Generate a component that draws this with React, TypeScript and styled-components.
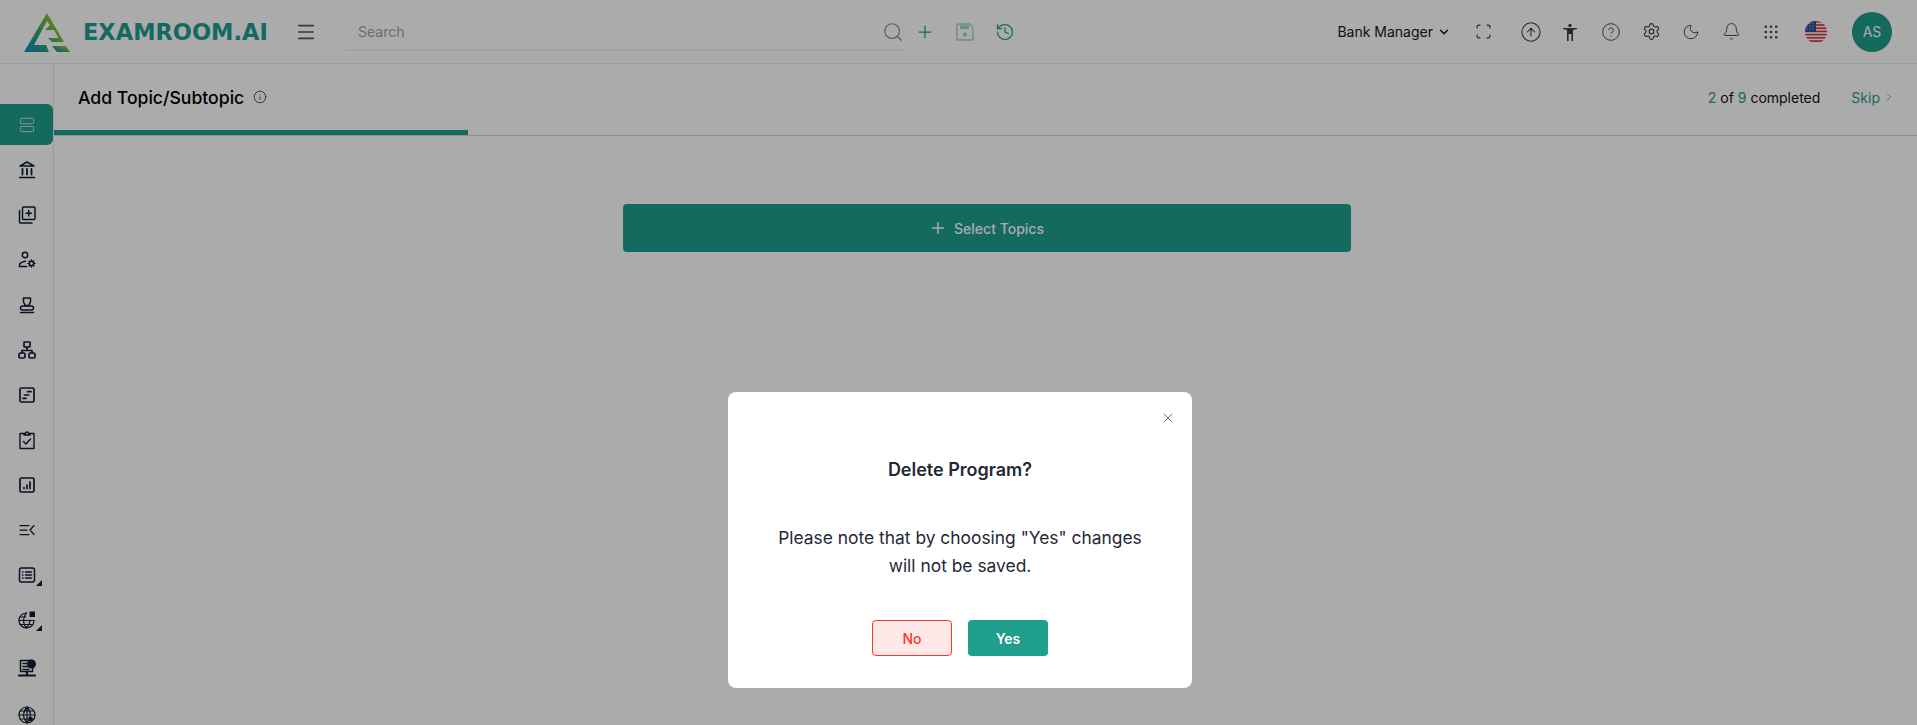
import React from "react";
import styled, { createGlobalStyle } from "styled-components";
import {
  Bell,
  ChevronDown,
  ChevronRight,
  CircleArrowUp,
  CircleHelp,
  Grip,
  History,
  Info,
  Menu,
  Moon,
  Plus,
  Scan,
  Search,
  Server,
  Settings,
  X,
} from "lucide-react";

const TEAL = "#1f9e8d";
const INK = "#111827";
const NAVY = "#111c33";

const GlobalStyle = createGlobalStyle`
  html, body {
    margin: 0;
    height: 100%;
    overflow: hidden;
    background: #fff;
    font-family: Inter, "Liberation Sans", sans-serif;
    color: ${INK};
  }
  * { box-sizing: border-box; }
  svg { flex: none; }
`;

const Page = styled.div`
  height: 725px;
  display: flex;
  flex-direction: column;
  overflow: hidden;
`;

const Header = styled.header`
  height: 64px;
  flex: none;
  display: flex;
  align-items: center;
  padding: 0 25px 0 24px;
  border-bottom: 1px solid #e5e7eb;
`;
const LogoBox = styled.div`
  display: flex;
  align-items: center;
  width: 271px;
  margin-top: 1px;
`;
const LogoText = styled.span`
  margin-left: 13px;
  font-family: "DejaVu Sans", sans-serif;
  font-weight: 700;
  font-size: 22.5px;
  color: ${TEAL};
  white-space: nowrap;
`;
const MenuButton = styled.div`
  width: 51px;
  display: flex;
  color: #4b5563;
`;
const SearchField = styled.div`
  width: 559px;
  height: 38px;
  display: flex;
  align-items: center;
  justify-content: space-between;
  padding: 0 1px 0 12px;
  border-bottom: 1px solid #e5e7eb;
  margin-top: 1px;
  font-size: 14px;
  color: #9ca3af;
`;
const SearchActions = styled.div`
  display: flex;
  align-items: center;
  margin-left: 10px;
  gap: 20px;
  color: ${TEAL};
`;
const RightGroup = styled.div`
  margin-left: auto;
  display: flex;
  align-items: center;
`;
const RoleSelect = styled.div`
  display: flex;
  align-items: center;
  gap: 4px;
  font-size: 14px;
  color: ${INK};
  margin-right: 22px;
`;
const ToolIcon = styled.div<{ $gap?: number }>`
  width: 20px;
  height: 20px;
  display: flex;
  align-items: center;
  justify-content: center;
  margin-right: ${(p) => p.$gap ?? 20}px;
  color: #374151;
`;
const FlagBox = styled.div`
  width: 22px;
  height: 22px;
  margin-right: 25px;
  margin-left: 3px;
`;
const Avatar = styled.div`
  width: 40px;
  height: 40px;
  border-radius: 50%;
  background: ${TEAL};
  color: #fff;
  font-size: 14px;
  display: flex;
  align-items: center;
  justify-content: center;
`;

const Body = styled.div`
  flex: 1;
  display: flex;
  min-height: 0;
`;
const Sidebar = styled.nav`
  width: 54px;
  flex: none;
  border-right: 1px solid #e5e7eb;
  padding-top: 38px;
  display: flex;
  flex-direction: column;
`;
const SideItem = styled.div<{ $active?: boolean; $push?: number }>`
  position: relative;
  height: 45px;
  flex: none;
  margin-top: ${(p) => p.$push ?? 0}px;
  display: flex;
  align-items: center;
  justify-content: center;
  color: ${(p) => (p.$active ? "#e8ecef" : NAVY)};
  &::before {
    content: "";
    display: ${(p) => (p.$active ? "block" : "none")};
    position: absolute;
    inset: 2px 0;
    background: ${TEAL};
    border-radius: 0 6px 6px 0;
  }
  svg {
    position: relative;
  }
`;
const Corner = styled.span`
  position: absolute;
  left: 36px;
  top: 28px;
  width: 0;
  height: 0;
  border-left: 6px solid transparent;
  border-bottom: 6px solid ${NAVY};
`;

const Main = styled.main`
  flex: 1;
  min-width: 0;
  display: flex;
  flex-direction: column;
  align-items: center;
`;
const StepBar = styled.div`
  width: 100%;
  height: 66px;
  flex: none;
  display: flex;
  align-items: center;
  padding: 0 22px 0 24px;
`;
const StepTitle = styled.h1`
  margin: 0;
  font-size: 17.6px;
  font-weight: 500;
  color: #000;
`;
const InfoMark = styled.span`
  display: flex;
  margin-left: 9px;
  color: #374151;
`;
const Progress = styled.div`
  margin-left: auto;
  font-size: 14px;
  color: #111;
`;
const Count = styled.span`
  color: ${TEAL};
`;
const SkipLink = styled.a`
  display: flex;
  align-items: center;
  gap: 3px;
  margin-left: 31px;
  font-size: 14px;
  color: ${TEAL};
`;
const Track = styled.div`
  width: 100%;
  height: 6px;
  flex: none;
  border-bottom: 1px solid #d1d5db;
`;
const TrackFill = styled.div`
  height: 5px;
  background: ${TEAL};
`;
const SelectButton = styled.button`
  margin: 68px 0 0 2px;
  width: 728px;
  height: 48px;
  flex: none;
  border: 0;
  border-radius: 4px;
  background: ${TEAL};
  color: #fff;
  font: 500 14px Inter, "Liberation Sans", sans-serif;
  display: flex;
  align-items: center;
  justify-content: center;
  gap: 7px;
`;

const Overlay = styled.div`
  position: fixed;
  inset: 0;
  background: rgba(0, 0, 0, 0.33);
  display: flex;
  justify-content: center;
  padding-top: 392px;
  padding-left: 3px;
`;
const Dialog = styled.div`
  position: relative;
  width: 464px;
  height: 296px;
  background: #fff;
  border-radius: 8px;
  display: flex;
  flex-direction: column;
  align-items: center;
  padding-top: 66px;
`;
const CloseButton = styled.div`
  position: absolute;
  top: 18px;
  right: 16px;
  display: flex;
  color: #6b7280;
`;
const DialogTitle = styled.h2`
  margin: 0;
  font-size: 18px;
  line-height: 24px;
  font-weight: 600;
  color: #1f2937;
`;
const DialogText = styled.p`
  margin: 42px 0 0;
  width: 385px;
  text-align: center;
  font-size: 17.4px;
  line-height: 28px;
  color: #1f2937;
`;
const DialogActions = styled.div`
  margin-top: 40px;
  display: flex;
  gap: 16px;
`;
const NoButton = styled.button`
  width: 80px;
  height: 36px;
  border-radius: 4px;
  border: 1px solid #f03a2e;
  background: #fee8e7;
  color: #f03a2e;
  font: 500 14px Inter, "Liberation Sans", sans-serif;
`;
const YesButton = styled.button`
  width: 80px;
  height: 36px;
  border-radius: 4px;
  border: 0;
  background: ${TEAL};
  color: #fff;
  font: 600 14px Inter, "Liberation Sans", sans-serif;
`;

function LogoMark() {
  return (
    <svg width="46" height="39" viewBox="0 0 46 39">
      <defs>
        <linearGradient id="logoGrad" x1="0" y1="1" x2="1" y2="0.2">
          <stop offset="0" stopColor="#1488b8" />
          <stop offset="0.45" stopColor="#2fa66f" />
          <stop offset="1" stopColor="#b5cf1a" />
        </linearGradient>
      </defs>
      <path
        fill="url(#logoGrad)"
        d="M23 0 L40 29 L28 29 L24 25 L34.5 25 L30 17 L21 17 L26 12 L23 8 L10 32 L22 32 L25 39 L0 39 Z"
      />
      <path fill="url(#logoGrad)" d="M28 33 L42 33 L46 39 L33 39 Z" />
    </svg>
  );
}

function SaveGlyph() {
  return (
    <svg width="20" height="20" viewBox="0 0 20 20" fill="none" stroke="currentColor" strokeWidth="1.4" opacity="0.45">
      <path d="M3.5 2h11L18 5.5V17a1 1 0 0 1-1 1H3a1 1 0 0 1-1-1V3.500A1.500 1.500 0 0 1 3.500 2Z" />
      <rect x="5" y="3.5" width="9" height="3.500" fill="currentColor" stroke="none" />
      <circle cx="10" cy="12.500" r="2" fill="currentColor" stroke="none" />
    </svg>
  );
}

function PersonGlyph() {
  return (
    <svg width="20" height="20" viewBox="0 0 20 20" fill="currentColor">
      <circle cx="10" cy="3.500" r="1.700" />
      <path d="M3 6h14v1l-4 1V19h-1.600v-7H8.600v7H7V8L3 7Z" />
    </svg>
  );
}

function UsFlag() {
  const stripes = [0, 1, 2, 3, 4, 5, 6];
  return (
    <svg width="22" height="22" viewBox="0 0 22 22">
      <defs>
        <clipPath id="flagClip">
          <circle cx="11" cy="11" r="11" />
        </clipPath>
      </defs>
      <g clipPath="url(#flagClip)">
        <rect width="22" height="22" fill="#f4f4f4" />
        {stripes.map((i) => (
          <rect key={i} y={i * 3.2} width="22" height="1.6" fill="#d8343f" />
        ))}
        <rect width="11" height="11" fill="#2f4a9b" />
        {[2, 5, 8].map((y) =>
          [2, 5, 8].map((x) => <circle key={`${x}-${y}`} cx={x} cy={y} r="0.6" fill="#fff" />),
        )}
      </g>
    </svg>
  );
}

const sideStroke = {
  width: 20,
  height: 20,
  viewBox: "0 0 20 20",
  fill: "none",
  stroke: "currentColor",
  strokeWidth: 1.5,
  strokeLinecap: "round" as const,
  strokeLinejoin: "round" as const,
};

function BankGlyph() {
  return (
    <svg {...sideStroke}>
      <path d="M3 6 10 2l7 4Z" />
      <path d="M5.500 9v5.500M10 9v5.500M14.500 9v5.500" strokeWidth={1.8} />
      <path d="M2.500 17.500h15" />
    </svg>
  );
}

function CopyPlusGlyph() {
  return (
    <svg {...sideStroke}>
      <rect x="5.500" y="2" width="12.500" height="12.500" rx="1" />
      <path d="M11.700 5.500v5.500M9 8.200h5.500" />
      <path d="M2.500 5.500V17a1 1 0 0 0 1 1h11.500" />
    </svg>
  );
}

function UserGearGlyph() {
  return (
    <svg {...sideStroke}>
      <circle cx="8" cy="5" r="2.700" />
      <path d="M2.500 16.500v-1.500c0-2 3-3.300 6-3.800" />
      <path d="M2.500 16.500h7" />
      <circle cx="14.500" cy="13.500" r="2.200" />
      <path d="M14.500 9.800v1.500M14.500 15.700v1.500M10.800 13.500h1.500M16.700 13.500h1.500M12 11l1 1M16 15l1 1M17 11l-1 1M13 15l-1 1" strokeWidth={1.2} />
    </svg>
  );
}

function StampGlyph() {
  return (
    <svg {...sideStroke}>
      <path d="M6.500 3h7v3.800c0 1-.8 1.500-1.200 2.200v1.500H7.700V9C7.300 8.300 6.500 7.800 6.500 6.800Z" />
      <rect x="3.500" y="11" width="13" height="4" rx="2" />
      <path d="M3.500 17.500h13" />
    </svg>
  );
}

function NetworkGlyph() {
  return (
    <svg {...sideStroke} strokeWidth={1.7}>
      <rect x="7" y="2" width="6" height="5" rx="0.5" />
      <path d="M10 7v3M5 13v-2.500h10V13" />
      <rect x="2" y="13" width="6" height="5" rx="1.500" />
      <rect x="12" y="13" width="6" height="5" rx="1.500" />
    </svg>
  );
}

function StepsGlyph() {
  return (
    <svg {...sideStroke} strokeWidth={1.7}>
      <rect x="3" y="3" width="14" height="14" rx="1.500" />
      <path d="M10.500 6.700h3.500M7.500 10h4M6 13.300h3" />
    </svg>
  );
}

function ClipCheckGlyph() {
  return (
    <svg {...sideStroke} strokeWidth={1.4}>
      <path d="M7 3.500H3v15h14v-15h-4" />
      <path d="M7 5V3.500h1.500a1.500 1.500 0 0 1 3 0H13V5Z" />
      <path d="M6.500 11.500 9 14l4.500-5" />
    </svg>
  );
}

function ChartBoxGlyph() {
  return (
    <svg {...sideStroke} strokeWidth={1.7}>
      <rect x="3" y="3" width="14" height="14" rx="1.500" />
      <path d="M7 13.500v-1M10 13.500v-3.500M13 13.500V7" />
    </svg>
  );
}

function CollapseGlyph() {
  return (
    <svg {...sideStroke} strokeWidth={1.25}>
      <path d="M3 5.500h9M3 10h7M3 14.500h9M17 5.500 13 10l4 4.500" />
    </svg>
  );
}

function ListBoxGlyph() {
  return (
    <svg {...sideStroke}>
      <rect x="2.500" y="3" width="15" height="14" rx="2" />
      <path d="M8.500 7h6M8.500 10h6M8.500 13h6M5.500 7h.5M5.500 10h.5M5.500 13h.5" />
    </svg>
  );
}

function GlobeBoxGlyph() {
  return (
    <svg {...sideStroke} strokeWidth={1.2}>
      <path d="M17 11a7.500 7.500 0 1 1-8-8" />
      <path d="M2 10.500h15M9.500 3c-4 4.500-4 10.500 0 15 2.500-2.800 3.500-5 3.600-8M2.800 7h6M2.800 14.500h13" />
      <rect x="12.500" y="1.500" width="5.500" height="5.500" fill="currentColor" stroke="none" />
    </svg>
  );
}

function ServerDotGlyph() {
  return (
    <svg {...sideStroke}>
      <rect x="3.500" y="1.500" width="12" height="11" fill="none" />
      <path d="M6 4.500h5M6 7.500h5M6 10.500h6" />
      <circle cx="14.500" cy="5" r="4.500" fill="currentColor" stroke="none" />
      <path d="M2 16.500h16M10 13v3.500" strokeWidth={2.2} />
    </svg>
  );
}

function GlobeDenseGlyph() {
  return (
    <svg {...sideStroke} strokeWidth={1.2}>
      <circle cx="10" cy="10" r="8" />
      <path d="M2 10h16M3 6h14M3 14h14M10 2v16M10 2c-4.500 5-4.500 11 0 16 4.500-5 4.500-11 0-16Z" />
      <circle cx="13.500" cy="14" r="2.300" fill="currentColor" stroke="none" />
    </svg>
  );
}

const sideItems: { icon: React.ReactNode; corner?: boolean; push?: number }[] = [
  { icon: <Server size={16} strokeWidth={1.25} /> },
  { icon: <BankGlyph /> },
  { icon: <CopyPlusGlyph /> },
  { icon: <UserGearGlyph /> },
  { icon: <StampGlyph /> },
  { icon: <NetworkGlyph /> },
  { icon: <StepsGlyph /> },
  { icon: <ClipCheckGlyph /> },
  { icon: <ChartBoxGlyph /> },
  { icon: <CollapseGlyph /> },
  { icon: <ListBoxGlyph />, corner: true },
  { icon: <GlobeBoxGlyph />, corner: true },
  { icon: <ServerDotGlyph />, push: 4 },
  { icon: <GlobeDenseGlyph />, push: 1 },
];

const COMPLETED = 2;
const TOTAL = 9;

export default function App() {
  return (
    <>
      <GlobalStyle />
      <Page>
        <Header>
          <LogoBox>
            <LogoMark />
            <LogoText>EXAMROOM.AI</LogoText>
          </LogoBox>
          <MenuButton>
            <Menu size={22} strokeWidth={1.75} />
          </MenuButton>
          <SearchField>
            <span>Search</span>
            <Search size={22} strokeWidth={1.25} color="#80858d" />
          </SearchField>
          <SearchActions>
            <Plus size={20} strokeWidth={1.5} />
            <SaveGlyph />
            <History size={20} strokeWidth={1.5} />
          </SearchActions>
          <RightGroup>
            <RoleSelect>
              Bank Manager
              <ChevronDown size={14} strokeWidth={2.5} />
            </RoleSelect>
            <ToolIcon $gap={28}>
              <Scan size={17} strokeWidth={1.75} />
            </ToolIcon>
            <ToolIcon $gap={19}>
              <CircleArrowUp size={22} strokeWidth={1.15} />
            </ToolIcon>
            <ToolIcon $gap={21}>
              <PersonGlyph />
            </ToolIcon>
            <ToolIcon>
              <CircleHelp size={20} strokeWidth={1.1} />
            </ToolIcon>
            <ToolIcon>
              <Settings size={19} strokeWidth={1.4} />
            </ToolIcon>
            <ToolIcon>
              <Moon size={18} strokeWidth={1.25} />
            </ToolIcon>
            <ToolIcon>
              <Bell size={19} strokeWidth={1.2} />
            </ToolIcon>
            <ToolIcon $gap={21}>
              <Grip size={18} strokeWidth={1.5} />
            </ToolIcon>
            <FlagBox>
              <UsFlag />
            </FlagBox>
            <Avatar>AS</Avatar>
          </RightGroup>
        </Header>
        <Body>
          <Sidebar>
            {sideItems.map((item, i) => (
              <SideItem key={i} $active={i === 0} $push={item.push}>
                {item.icon}
                {item.corner && <Corner />}
              </SideItem>
            ))}
          </Sidebar>
          <Main>
            <StepBar>
              <StepTitle>Add Topic/Subtopic</StepTitle>
              <InfoMark>
                <Info size={14} strokeWidth={1.5} />
              </InfoMark>
              <Progress>
                <Count>{COMPLETED}</Count> of <Count>{TOTAL}</Count> completed
              </Progress>
              <SkipLink>
                Skip
                <ChevronRight size={12} strokeWidth={1.5} />
              </SkipLink>
            </StepBar>
            <Track>
              <TrackFill style={{ width: `${(COMPLETED / TOTAL) * 100}%` }} />
            </Track>
            <SelectButton>
              <Plus size={18} strokeWidth={2} />
              Select Topics
            </SelectButton>
          </Main>
        </Body>
      </Page>
      <Overlay>
        <Dialog>
          <CloseButton>
            <X size={16} strokeWidth={1.5} />
          </CloseButton>
          <DialogTitle>Delete Program?</DialogTitle>
          <DialogText>Please note that by choosing "Yes" changes will not be saved.</DialogText>
          <DialogActions>
            <NoButton>No</NoButton>
            <YesButton>Yes</YesButton>
          </DialogActions>
        </Dialog>
      </Overlay>
    </>
  );
}
